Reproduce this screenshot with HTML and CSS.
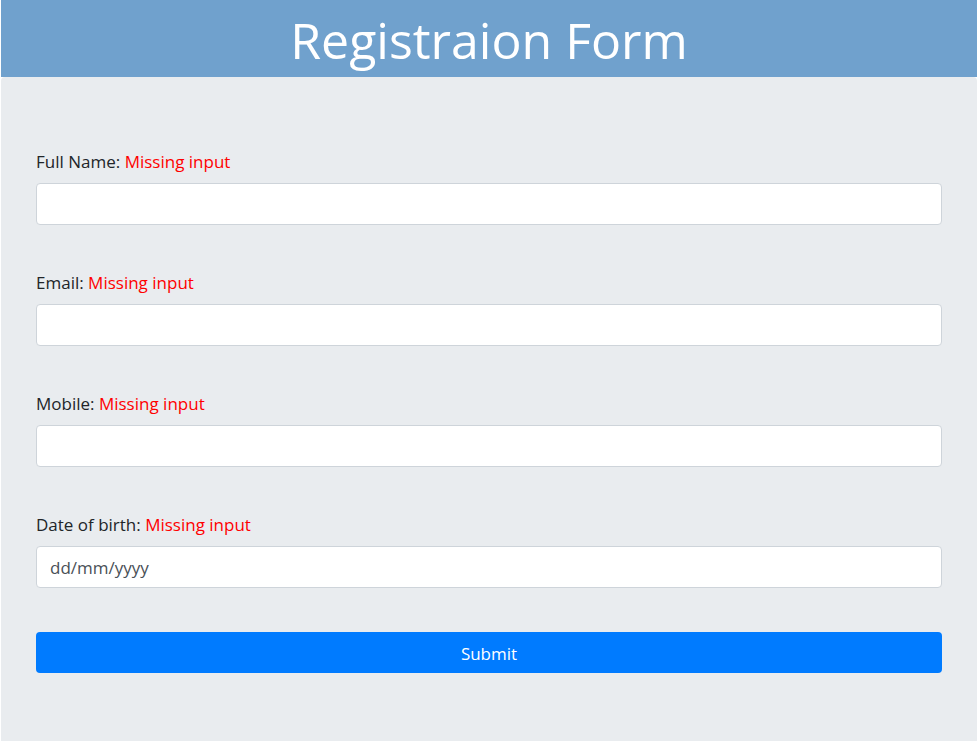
FILE: index.html
```html
<!DOCTYPE html>
<html lang="en">
<head>
 <meta charset="UTF-8">
 <title>Registraion Form</title>
 <link rel="stylesheet" href="styles.css">
</head>
<body>
<h1 class="page-title">Registraion Form</h1>
<div class="panel">
 <form class="reg-form">
 <div class="form-group">
 <label for="fullname">Full Name: <span class="error">Missing input</span></label>
 <input type="text" id="fullname" class="form-control">
 </div>
 <div class="form-group">
 <label for="email">Email: <span class="error">Missing input</span></label>
 <input type="text" id="email" class="form-control">
 </div>
 <div class="form-group">
 <label for="mobile">Mobile: <span class="error">Missing input</span></label>
 <input type="text" id="mobile" class="form-control">
 </div>
 <div class="form-group">
 <label for="dob">Date of birth: <span class="error">Missing input</span></label>
 <input type="text" id="dob" class="form-control" placeholder="dd/mm/yyyy">
 </div>
 <button type="button" class="btn-submit">Submit</button>
 </form>
</div>
</body>
</html>
```

FILE: styles.css
```css
body {
 margin: 0;
 padding: 0 2px 0 1px;
 font-family: "Open Sans", "Noto Sans", sans-serif;
 font-size: 17px;
 color: #212529;
 background: #fff;
 }
.page-title {
 margin: 0;
 height: 77px;
 line-height: 80px;
 text-align: center;
 font-size: 50px;
 font-weight: 400;
 color: #fff;
 background-color: #70a1cd;
 }
.panel {
 background-color: #e9ecef;
 border-radius: 4px;
 padding: 72px 35px 72px 35px;
 }
.form-group {
 margin-bottom: 45px;
 }
.form-group:last-of-type {
 margin-bottom: 44px;
 }
.form-group label {
 display: block;
 line-height: 24px;
 padding-top: 1px;
 margin-bottom: 9px;
 }
.error {
 color: #ff0000;
 }
.form-control {
 display: block;
 width: 100%;
 height: 42px;
 box-sizing: border-box;
 padding: 6px 13px;
 font-family: inherit;
 font-size: 17px;
 color: #495057;
 background-color: #fff;
 border: 1px solid #ced4da;
 border-radius: 4px;
 outline: none;
 }
.form-control::placeholder {
 color: #495057;
 }
.btn-submit {
 display: block;
 width: 100%;
 height: 41px;
 padding-top: 2px;
 font-family: inherit;
 font-size: 17px;
 color: #fff;
 background-color: #007bff;
 border: none;
 border-radius: 4px;
 cursor: pointer;
 }
```
